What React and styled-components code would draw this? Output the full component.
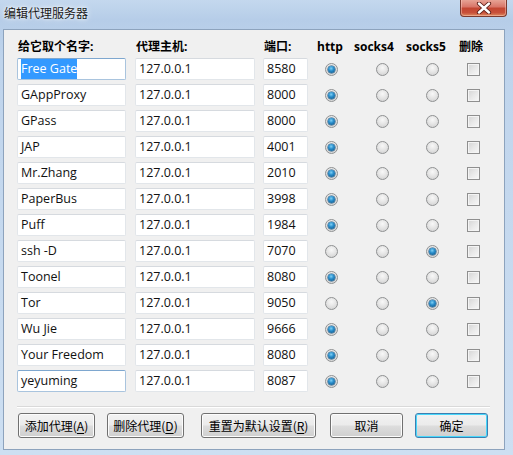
import styled, { createGlobalStyle } from "styled-components";

const GlobalStyle = createGlobalStyle`
  html, body { margin: 0; padding: 0; }
  body { background: #ffffff; }
`;

const rows = [
  { name: "Free Gate", port: "8580", type: "http", selected: true, active: true },
  { name: "GAppProxy", port: "8000", type: "http" },
  { name: "GPass", port: "8000", type: "http" },
  { name: "JAP", port: "4001", type: "http" },
  { name: "Mr.Zhang", port: "2010", type: "http" },
  { name: "PaperBus", port: "3998", type: "http" },
  { name: "Puff", port: "1984", type: "http" },
  { name: "ssh -D", port: "7070", type: "socks5" },
  { name: "Toonel", port: "8080", type: "http" },
  { name: "Tor", port: "9050", type: "socks5" },
  { name: "Wu Jie", port: "9666", type: "http" },
  { name: "Your Freedom", port: "8080", type: "http" },
  { name: "yeyuming", port: "8087", type: "http", active: true },
];

const App = () => {
  return (
    <>
      <GlobalStyle />
      <Window>
        <TitleBar>
          <Title>编辑代理服务器</Title>
          <CloseButton>
            <svg width="16" height="12" viewBox="0 0 16 12">
              <path d="M3 1.5 L13 10.5 M13 1.5 L3 10.5" stroke="#5a1d16" strokeWidth="4.2" strokeLinecap="round" />
              <path d="M3 1.5 L13 10.5 M13 1.5 L3 10.5" stroke="#ffffff" strokeWidth="2.4" strokeLinecap="round" />
            </svg>
          </CloseButton>
        </TitleBar>
        <Panel>
          <Grid>
            <Head $indent={1}>给它取个名字:</Head>
            <Head $indent={1}>代理主机:</Head>
            <Head $indent={1}>端口:</Head>
            <Head $indent={9}>http</Head>
            <Head $indent={0}>socks4</Head>
            <Head $indent={-4}>socks5</Head>
            <Head $indent={4}>删除</Head>
          </Grid>
          <Rows>
            {rows.map((r) => (
              <Grid key={r.name}>
                <Field $w={109} $active={r.active}>
                  {r.selected ? <Selected>{r.name}</Selected> : r.name}
                </Field>
                <Field $w={120}>127.0.0.1</Field>
                <Field $w={45}>{r.port}</Field>
                <Cell><Radio $on={r.type === "http"} /></Cell>
                <Cell><Radio $on={r.type === "socks4"} /></Cell>
                <Cell><Radio $on={r.type === "socks5"} /></Cell>
                <Cell><Check /></Cell>
              </Grid>
            ))}
          </Rows>
          <Separator />
          <Buttons>
            <Button $w={77}>添加代理(<u>A</u>)</Button>
            <Button $w={77} $ml={12}>删除代理(<u>D</u>)</Button>
            <Button $w={115} $ml={17}>重置为默认设置(<u>R</u>)</Button>
            <Button $w={73} $ml={14}>取消</Button>
            <Button $w={73} $ml={12} $default>确定</Button>
          </Buttons>
        </Panel>
      </Window>
    </>
  );
};

const Window = styled.div`
  width: 513px;
  height: 455px;
  box-sizing: border-box;
  padding: 0 8px 5px 3px;
  display: flex;
  flex-direction: column;
  background: linear-gradient(180deg, #c4d8ee 0px, #b6cde8 20px, #bfd4ec 60px, #cddff2 100%);
  font-family: "Open Sans", "Noto Sans CJK SC", sans-serif;
  overflow: hidden;
`;

const TitleBar = styled.div`
  height: 29px;
  display: flex;
  justify-content: space-between;
  align-items: flex-start;
  padding-left: 1px;
`;

const Title = styled.div`
  font-family: "Noto Sans CJK SC", sans-serif;
  font-size: 12px;
  line-height: 12px;
  margin-top: 7px;
  color: #1a1a1a;
  text-shadow: 0 0 6px rgba(255, 255, 255, 0.9), 0 0 3px rgba(255, 255, 255, 0.9);
`;

const CloseButton = styled.div`
  width: 47px;
  height: 18px;
  margin-top: -1px;
  margin-right: -2px;
  box-sizing: border-box;
  display: flex;
  align-items: center;
  justify-content: center;
  border: 1px solid #7a3a30;
  border-top: none;
  border-radius: 0 0 4px 4px;
  background: linear-gradient(180deg, #e9a99b 0%, #d9776a 45%, #c34632 55%, #c8503a 80%, #dc8a5f 100%);
  box-shadow: inset 0 0 0 1px rgba(255, 210, 200, 0.45);
`;

const Panel = styled.div`
  flex: 1;
  background: #f0f0f0;
  border: 1px solid #8da3bd;
  padding: 8px 0 0 13px;
  display: flex;
  flex-direction: column;
`;

const Grid = styled.div`
  display: grid;
  grid-template-columns: 118px 128px 45px 46px 56px 45px 37px;
  align-items: center;
`;

const Head = styled.div`
  font-family: "Open Sans", "Noto Sans CJK SC", sans-serif;
  font-weight: 700;
  font-size: 12px;
  line-height: 18px;
  height: 18px;
  color: #000;
  margin-left: ${(p) => p.$indent}px;
  white-space: nowrap;
`;

const Rows = styled.div`
  display: flex;
  flex-direction: column;
  gap: 4px;
  margin-top: 2px;
`;

const Field = styled.div`
  width: ${(p) => p.$w}px;
  height: 22px;
  box-sizing: border-box;
  background: #fff;
  border: 1px solid ${(p) => (p.$active ? "#a9c4de" : "#e2e6ea")};
  border-top-color: ${(p) => (p.$active ? "#7ea7cf" : "#d6dadf")};
  border-radius: 2px;
  padding-left: 3px;
  font-family: "Open Sans", sans-serif;
  font-size: 12.5px;
  line-height: 20px;
  color: #111;
  white-space: nowrap;
  overflow: hidden;
`;

const Selected = styled.span`
  background: #3399ff;
  color: #fff;
  padding: 1px 0 2px;
`;

const Cell = styled.div`
  display: flex;
  justify-content: center;
  align-items: center;
  height: 22px;
`;

const Radio = styled.div`
  width: 13px;
  height: 13px;
  box-sizing: border-box;
  border-radius: 50%;
  border: 1px solid #8f9192;
  background: radial-gradient(circle at 50% 35%, #f8f8f8 0%, #e6e6e6 45%, #cdcdcd 100%);
  position: relative;
  &::after {
    content: "";
    display: ${(p) => (p.$on ? "block" : "none")};
    position: absolute;
    left: 2px;
    top: 2px;
    width: 7px;
    height: 7px;
    border-radius: 50%;
    background: radial-gradient(circle at 45% 35%, #7fd0f5 0%, #2b8fcc 40%, #0b4d7e 100%);
    box-shadow: 0 0 0 0.5px #174e78;
  }
`;

const Check = styled.div`
  width: 13px;
  height: 13px;
  box-sizing: border-box;
  border: 1px solid #8f8f8f;
  background: linear-gradient(135deg, #d4d4d4 0%, #e8e8e8 50%, #f8f8f8 100%);
  box-shadow: inset 0 0 0 1px #f4f4f4;
`;

const Separator = styled.div`
  width: 473px;
  height: 1px;
  background: #d9d9d9;
  border-bottom: 1px solid #ffffff;
  margin-top: 14px;
`;

const Buttons = styled.div`
  display: flex;
  margin-top: 5px;
  padding-left: 1px;
`;

const Button = styled.div`
  width: ${(p) => p.$w}px;
  height: 25px;
  box-sizing: border-box;
  margin-left: ${(p) => p.$ml || 0}px;
  display: flex;
  align-items: center;
  justify-content: center;
  border: 1px solid ${(p) => (p.$default ? "#3c7fb1" : "#707070")};
  border-radius: 3px;
  background: linear-gradient(180deg, #f2f2f2 0%, #ebebeb 48%, #dddddd 52%, #cfcfcf 100%);
  box-shadow: inset 0 0 0 1px ${(p) => (p.$default ? "#48d7fb" : "#fcfcfc")};
  font-family: "Noto Sans CJK SC", sans-serif;
  font-size: 12px;
  color: #000;
  white-space: nowrap;
  u { text-underline-offset: 2px; }
`;

export default App;
